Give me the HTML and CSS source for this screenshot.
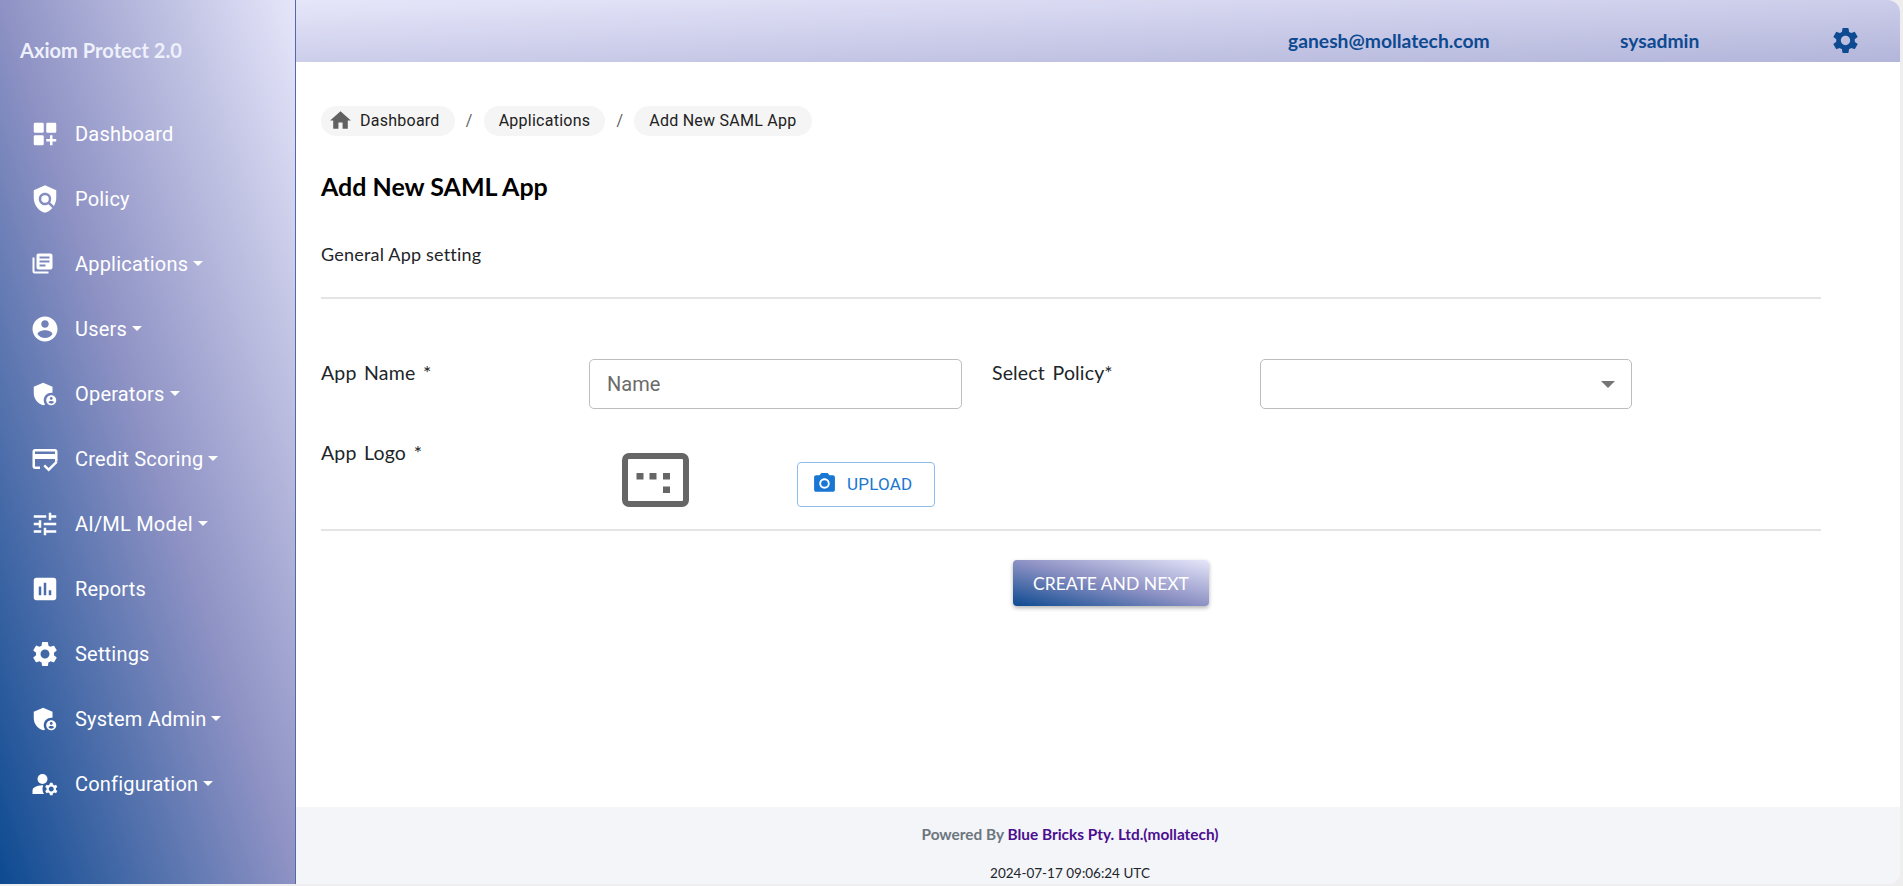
FILE: index.html
```html
<!DOCTYPE html>
<html lang="en">
<head>
  <meta charset="UTF-8">
  <title>Add New SAML App</title>
  <link rel="stylesheet" href="styles.css">
</head>
<body>
  <div class="app">
    <aside class="sidebar">
      <div class="brand">Axiom Protect 2.0</div>
      <nav class="nav">
        <a class="nav-item"><svg class="nav-icon" viewBox="0 0 24 24"><rect x="3" y="3" width="8" height="8" rx="1"/><rect x="13" y="3" width="8" height="8" rx="1"/><rect x="3" y="13" width="8" height="8" rx="1"/><path d="M18 13h-2v3h-3v2h3v3h2v-3h3v-2h-3z"/></svg><span>Dashboard</span></a>
        <a class="nav-item"><svg class="nav-icon" viewBox="0 0 24 24"><path d="M12 1 3 5v6c0 5.55 3.84 10.74 9 12 2.3-.56 4.33-1.9 5.88-3.71l-3.12-3.12c-1.94 1.29-4.58 1.07-6.29-.64-1.95-1.95-1.95-5.12 0-7.07 1.95-1.95 5.12-1.95 7.07 0 1.71 1.71 1.92 4.35.64 6.29l2.9 2.9C20.29 15.69 21 13.38 21 11V5l-9-4z"/><circle cx="12" cy="12" r="3"/></svg><span>Policy</span></a>
        <a class="nav-item"><svg class="nav-icon" viewBox="-0.5 -2.5 30 30"><path d="M4 6H2v14c0 1.1.9 2 2 2h14v-2H4V6zm16-4H8c-1.1 0-2 .9-2 2v12c0 1.1.9 2 2 2h12c1.1 0 2-.9 2-2V4c0-1.1-.9-2-2-2zm-1 9H9V9h10v2zm-4 4H9v-2h6v2zm4-8H9V5h10v2z"/></svg><span>Applications</span><i class="caret"></i></a>
        <a class="nav-item"><svg class="nav-icon" viewBox="0 0 24 24"><path d="M12 2C6.48 2 2 6.48 2 12s4.48 10 10 10 10-4.48 10-10S17.52 2 12 2zm0 3c1.66 0 3 1.34 3 3s-1.34 3-3 3-3-1.34-3-3 1.34-3 3-3zm0 14.2c-2.5 0-4.71-1.28-6-3.22.03-1.99 4-3.08 6-3.08 1.99 0 5.97 1.09 6 3.08-1.29 1.94-3.5 3.22-6 3.22z"/></svg><span>Users</span><i class="caret"></i></a>
        <a class="nav-item"><svg class="nav-icon" viewBox="0 0 24 24"><path d="M17 11c.34 0 .67.04 1 .09V6.27L10.5 3 3 6.27v4.91c0 4.54 3.2 8.79 7.5 9.82.55-.13 1.08-.32 1.6-.55-.69-.98-1.1-2.17-1.1-3.45 0-3.31 2.69-6 6-6z"/><path d="M17 13c-2.21 0-4 1.79-4 4s1.79 4 4 4 4-1.79 4-4-1.79-4-4-4zm0 1.38c.62 0 1.12.51 1.12 1.12s-.51 1.12-1.12 1.12-1.12-.51-1.12-1.12.5-1.12 1.12-1.12zm0 5.37c-.93 0-1.74-.46-2.24-1.17.05-.72 1.51-1.08 2.24-1.08s2.19.36 2.24 1.08c-.5.71-1.31 1.17-2.24 1.17z"/></svg><span>Operators</span><i class="caret"></i></a>
        <a class="nav-item"><svg class="nav-icon" viewBox="0 0 24 24"><path d="M20 4H4c-1.11 0-2 .89-2 2v12c0 1.11.89 2 2 2h4v-2H4v-6h16v2h2V6c0-1.1-.9-2-2-2zm0 4H4V6h16v2zm-5.07 11.17-2.83-2.83-1.41 1.41L14.93 22 22 14.93l-1.41-1.41-5.66 5.65z"/></svg><span>Credit Scoring</span><i class="caret"></i></a>
        <a class="nav-item"><svg class="nav-icon" viewBox="0 0 24 24"><path d="M3 17v2h6v-2H3zM3 5v2h10V5H3zm10 16v-2h8v-2h-8v-2h-2v6h2zM7 9v2H3v2h4v2h2V9H7zm14 4v-2H11v2h10zm-6-4h2V7h4V5h-4V3h-2v6z"/></svg><span>AI/ML Model</span><i class="caret"></i></a>
        <a class="nav-item"><svg class="nav-icon" viewBox="0 0 24 24"><path d="M19 3H5c-1.1 0-2 .9-2 2v14c0 1.1.9 2 2 2h14c1.1 0 2-.9 2-2V5c0-1.1-.9-2-2-2zM9 17H7v-7h2v7zm4 0h-2V7h2v10zm4 0h-2v-4h2v4z"/></svg><span>Reports</span></a>
        <a class="nav-item"><svg class="nav-icon" viewBox="0 0 24 24"><path d="M19.14 12.94c.04-.3.06-.61.06-.94 0-.32-.02-.64-.07-.94l2.03-1.58c.18-.14.23-.41.12-.61l-1.92-3.32c-.12-.22-.37-.29-.59-.22l-2.39.96c-.5-.38-1.03-.7-1.62-.94l-.36-2.54c-.04-.24-.24-.41-.48-.41h-3.84c-.24 0-.43.17-.47.41l-.36 2.54c-.59.24-1.13.57-1.62.94l-2.39-.96c-.22-.08-.47 0-.59.22L2.74 8.87c-.12.21-.08.47.12.61l2.03 1.58c-.05.3-.09.63-.09.94s.02.64.07.94l-2.03 1.58c-.18.14-.23.41-.12.61l1.92 3.32c.12.22.37.29.59.22l2.39-.96c.5.38 1.03.7 1.62.94l.36 2.54c.05.24.24.41.48.41h3.84c.24 0 .44-.17.47-.41l.36-2.54c.59-.24 1.13-.56 1.62-.94l2.39.96c.22.08.47 0 .59-.22l1.92-3.32c.12-.22.07-.47-.12-.61l-2.01-1.58zM12 15.6c-1.98 0-3.6-1.62-3.6-3.6s1.62-3.6 3.6-3.6 3.6 1.62 3.6 3.6-1.62 3.6-3.6 3.6z"/></svg><span>Settings</span></a>
        <a class="nav-item"><svg class="nav-icon" viewBox="0 0 24 24"><path d="M17 11c.34 0 .67.04 1 .09V6.27L10.5 3 3 6.27v4.91c0 4.54 3.2 8.79 7.5 9.82.55-.13 1.08-.32 1.6-.55-.69-.98-1.1-2.17-1.1-3.45 0-3.31 2.69-6 6-6z"/><path d="M17 13c-2.21 0-4 1.79-4 4s1.79 4 4 4 4-1.79 4-4-1.79-4-4-4zm0 1.38c.62 0 1.12.51 1.12 1.12s-.51 1.12-1.12 1.12-1.12-.51-1.12-1.12.5-1.12 1.12-1.12zm0 5.37c-.93 0-1.74-.46-2.24-1.17.05-.72 1.51-1.08 2.24-1.08s2.19.36 2.24 1.08c-.5.71-1.31 1.17-2.24 1.17z"/></svg><span>System Admin</span><i class="caret"></i></a>
        <a class="nav-item"><svg class="nav-icon" viewBox="0 0 24 24"><circle cx="10" cy="8" r="4"/><path d="M10.67 13.02c-.22-.01-.44-.02-.67-.02-2.42 0-4.68.67-6.61 1.82-.88.52-1.39 1.5-1.39 2.53V20h9.26c-.79-1.13-1.26-2.51-1.26-4 0-1.07.25-2.07.67-2.98z"/><path d="M20.75 16c0-.22-.03-.42-.06-.63l1.14-1.01-1-1.73-1.45.49c-.32-.27-.68-.48-1.08-.63L18 11h-2l-.3 1.49c-.4.15-.76.36-1.08.63l-1.45-.49-1 1.73 1.14 1.01c-.03.21-.06.41-.06.63s.03.42.06.63l-1.14 1.01 1 1.73 1.45-.49c.32.27.68.48 1.08.63L16 21h2l.3-1.49c.4-.15.76-.36 1.08-.63l1.45.49 1-1.73-1.14-1.01c.03-.21.06-.41.06-.63zM17 18c-1.1 0-2-.9-2-2s.9-2 2-2 2 .9 2 2-.9 2-2 2z"/></svg><span>Configuration</span><i class="caret"></i></a>
      </nav>
    </aside>

    <div class="main">
      <header class="topbar">
        <span class="topbar-email">ganesh@mollatech.com</span>
        <span class="topbar-role">sysadmin</span>
        <svg class="topbar-gear" viewBox="0 0 24 24"><path d="M19.14 12.94c.04-.3.06-.61.06-.94 0-.32-.02-.64-.07-.94l2.03-1.58c.18-.14.23-.41.12-.61l-1.92-3.32c-.12-.22-.37-.29-.59-.22l-2.39.96c-.5-.38-1.03-.7-1.62-.94l-.36-2.54c-.04-.24-.24-.41-.48-.41h-3.84c-.24 0-.43.17-.47.41l-.36 2.54c-.59.24-1.13.57-1.62.94l-2.39-.96c-.22-.08-.47 0-.59.22L2.74 8.87c-.12.21-.08.47.12.61l2.03 1.58c-.05.3-.09.63-.09.94s.02.64.07.94l-2.03 1.58c-.18.14-.23.41-.12.61l1.92 3.32c.12.22.37.29.59.22l2.39-.96c.5.38 1.03.7 1.62.94l.36 2.54c.05.24.24.41.48.41h3.84c.24 0 .44-.17.47-.41l.36-2.54c.59-.24 1.13-.56 1.62-.94l2.39.96c.22.08.47 0 .59-.22l1.92-3.32c.12-.22.07-.47-.12-.61l-2.01-1.58zM12 15.6c-1.98 0-3.6-1.62-3.6-3.6s1.62-3.6 3.6-3.6 3.6 1.62 3.6 3.6-1.62 3.6-3.6 3.6z"/></svg>
      </header>

      <main class="content">
        <div class="crumbs">
          <a class="chip chip-home"><svg class="chip-icon" viewBox="0 0 24 24"><path d="M10 20v-6h4v6h5v-8h3L12 3 2 12h3v8z"/></svg>Dashboard</a>
          <span class="crumb-sep">/</span>
          <a class="chip">Applications</a>
          <span class="crumb-sep">/</span>
          <a class="chip">Add New SAML App</a>
        </div>

        <h1 class="page-title">Add New SAML App</h1>
        <p class="section-title">General App setting</p>
        <hr class="rule rule-top">

        <div class="form-row">
          <label class="field-label" for="appName">App Name *</label>
          <input class="field-box field-input" id="appName" type="text" placeholder="Name">
          <label class="field-label field-label-second">Select Policy*</label>
          <div class="field-box field-select"><i class="select-caret"></i></div>
        </div>

        <div class="form-row logo-row">
          <label class="field-label">App Logo *</label>
          <svg class="logo-preview" viewBox="0 0 67 54">
            <rect class="logo-frame" x="3" y="3" width="61" height="48" rx="4"/>
            <rect x="14.5" y="20" width="7" height="6.5"/>
            <rect x="27.5" y="20" width="7" height="6.5"/>
            <rect x="41" y="20" width="7" height="6.5"/>
            <rect x="41" y="33.5" width="7" height="6.5"/>
          </svg>
          <button class="upload-btn" type="button"><svg class="upload-icon" viewBox="0 0 24 24"><circle cx="12" cy="12" r="3.2"/><path d="M9 2 7.17 4H4c-1.1 0-2 .9-2 2v12c0 1.1.9 2 2 2h16c1.1 0 2-.9 2-2V6c0-1.1-.9-2-2-2h-3.17L15 2H9zm3 15c-2.76 0-5-2.24-5-5s2.24-5 5-5 5 2.24 5 5-2.24 5-5 5z"/></svg>UPLOAD</button>
        </div>
        <hr class="rule rule-bottom">

        <div class="form-actions">
          <button class="primary-btn" type="button">CREATE AND NEXT</button>
        </div>
      </main>

      <footer class="footer">
        <p class="footer-line">Powered By <a class="footer-link">Blue Bricks Pty. Ltd.(mollatech)</a></p>
        <p class="footer-date">2024-07-17 09:06:24 UTC</p>
      </footer>
    </div>
  </div>
</body>
</html>
```

FILE: styles.css
```css
html, body { margin: 0; height: 100%; background: #eeeeee; overflow: hidden; }
body { font-family: "Lato", "Liberation Sans", sans-serif; color: #212529; }
p, h1 { margin: 0; }

.app { display: flex; width: 1900px; height: 884px; background: #fff; border-radius: 0 12px 12px 0; overflow: hidden; }

/* sidebar */
.sidebar { flex: 0 0 296px; box-sizing: border-box; border-right: 1px solid #5569a6; background: linear-gradient(to top right, #0d4a91, #8e92c4, #e6e6fa); color: #fff; }
.brand { padding: 36px 0 0 20px; height: 65px; font-size: 20.1px; font-weight: 700; line-height: 28px; color: #eef0fb; }
.nav { display: flex; flex-direction: column; }
.nav-item { display: flex; align-items: center; height: 65px; padding-left: 30px; font-family: "Roboto", sans-serif; font-size: 20px; letter-spacing: .2px; color: #fff; }
.nav-icon { width: 30px; height: 30px; margin-right: 15px; fill: #fff; flex: none; }
.caret { width: 0; height: 0; margin-left: 5px; border: 5px solid transparent; border-top-color: #fff; border-bottom: 0; }

/* top bar */
.main { flex: 1; display: flex; flex-direction: column; min-width: 0; }
.topbar { display: flex; align-items: center; box-sizing: border-box; height: 62px; padding-top: 18px; flex: none; background: linear-gradient(to bottom right, #e6e6fa, #b3b5da); color: #0d4a91; font-size: 19.3px; font-weight: 700; }
.topbar-email { margin-left: 992px; width: 332px; }
.topbar-role { width: 210px; }
.topbar-gear { width: 31px; height: 31px; fill: #0d4a91; }

/* content */
.content { flex: 1; padding: 44px 79px 0 25px; }
.crumbs { display: flex; align-items: center; height: 30px; font-family: "Roboto", sans-serif; font-size: 16px; line-height: 28px; color: #212121; }
.chip { display: flex; align-items: center; height: 30px; padding: 0 15px 1px; box-sizing: border-box; border-radius: 15px; background: #f5f5f5; letter-spacing: .25px; }
.chip-home { padding-left: 7px; }
.chip-icon { width: 25px; height: 25px; margin-right: 7px; fill: #616161; }
.crumb-sep { width: 29px; text-align: center; color: #616161; }
.page-title { margin-top: 36px; font-size: 25px; font-weight: 700; line-height: 28px; color: #000; }
.section-title { margin-top: 42px; font-size: 18px; letter-spacing: .2px; line-height: 24px; }
.rule { margin: 0; border: 0; border-top: 2px solid #e4e4e4; }
.rule-top { margin-top: 31px; }
.rule-bottom { margin-top: 22px; }

/* form */
.form-row { display: flex; align-items: flex-start; margin-top: 60px; }
.field-label { flex: 0 0 268px; font-size: 19.5px; letter-spacing: .15px; word-spacing: 2.5px; line-height: 28px; }
.field-label-second { margin-left: 30px; }
.field-box { box-sizing: border-box; height: 50px; border: 1px solid #bdbdbd; border-radius: 5px; background: #fff; }
.field-input { width: 373px; padding: 0 17px; font-family: "Roboto", sans-serif; font-size: 20px; color: #212121; }
.field-input::placeholder { color: #6b6b6b; opacity: 1; }
.field-select { display: flex; align-items: center; justify-content: flex-end; width: 372px; padding-right: 16px; }
.select-caret { width: 0; height: 0; border: 7px solid transparent; border-top-color: #757575; border-bottom: 0; }
.logo-row { margin-top: 30px; }
.logo-preview { width: 67px; height: 54px; margin: 14px 0 0 33px; fill: #666; flex: none; }
.logo-frame { fill: none; stroke: #666; stroke-width: 6; }
.upload-btn { display: flex; align-items: center; box-sizing: border-box; width: 138px; height: 45px; margin: 23px 0 0 108px; padding: 0 0 2px 14px; border: 1px solid #8fbcec; border-radius: 4px; background: #fff; font-family: "Roboto", sans-serif; font-size: 17px; letter-spacing: .2px; color: #1976d2; }
.upload-icon { width: 25px; height: 25px; margin-right: 10px; fill: #1976d2; }
.form-actions { display: flex; justify-content: center; margin-top: 29px; padding-left: 80px; }
.primary-btn { width: 196px; height: 46px; border: 0; border-radius: 4px; background: linear-gradient(to top right, #0d4a91, #8e92c4, #e6e6fa); box-shadow: 0 2px 4px rgba(0, 0, 0, .3); font-family: "Lato", sans-serif; font-size: 17.5px; color: #fff; }

/* footer */
.footer { flex: none; height: 77px; box-sizing: border-box; padding: 17px 56px 0 0; background: #f4f5f9; text-align: center; }
.footer-line { font-size: 15.4px; font-weight: 700; line-height: 20px; color: #6c757d; }
.footer-link { color: #4b0e8f; }
.footer-date { margin-top: 20px; font-size: 13.5px; line-height: 18px; color: #212529; }
```
